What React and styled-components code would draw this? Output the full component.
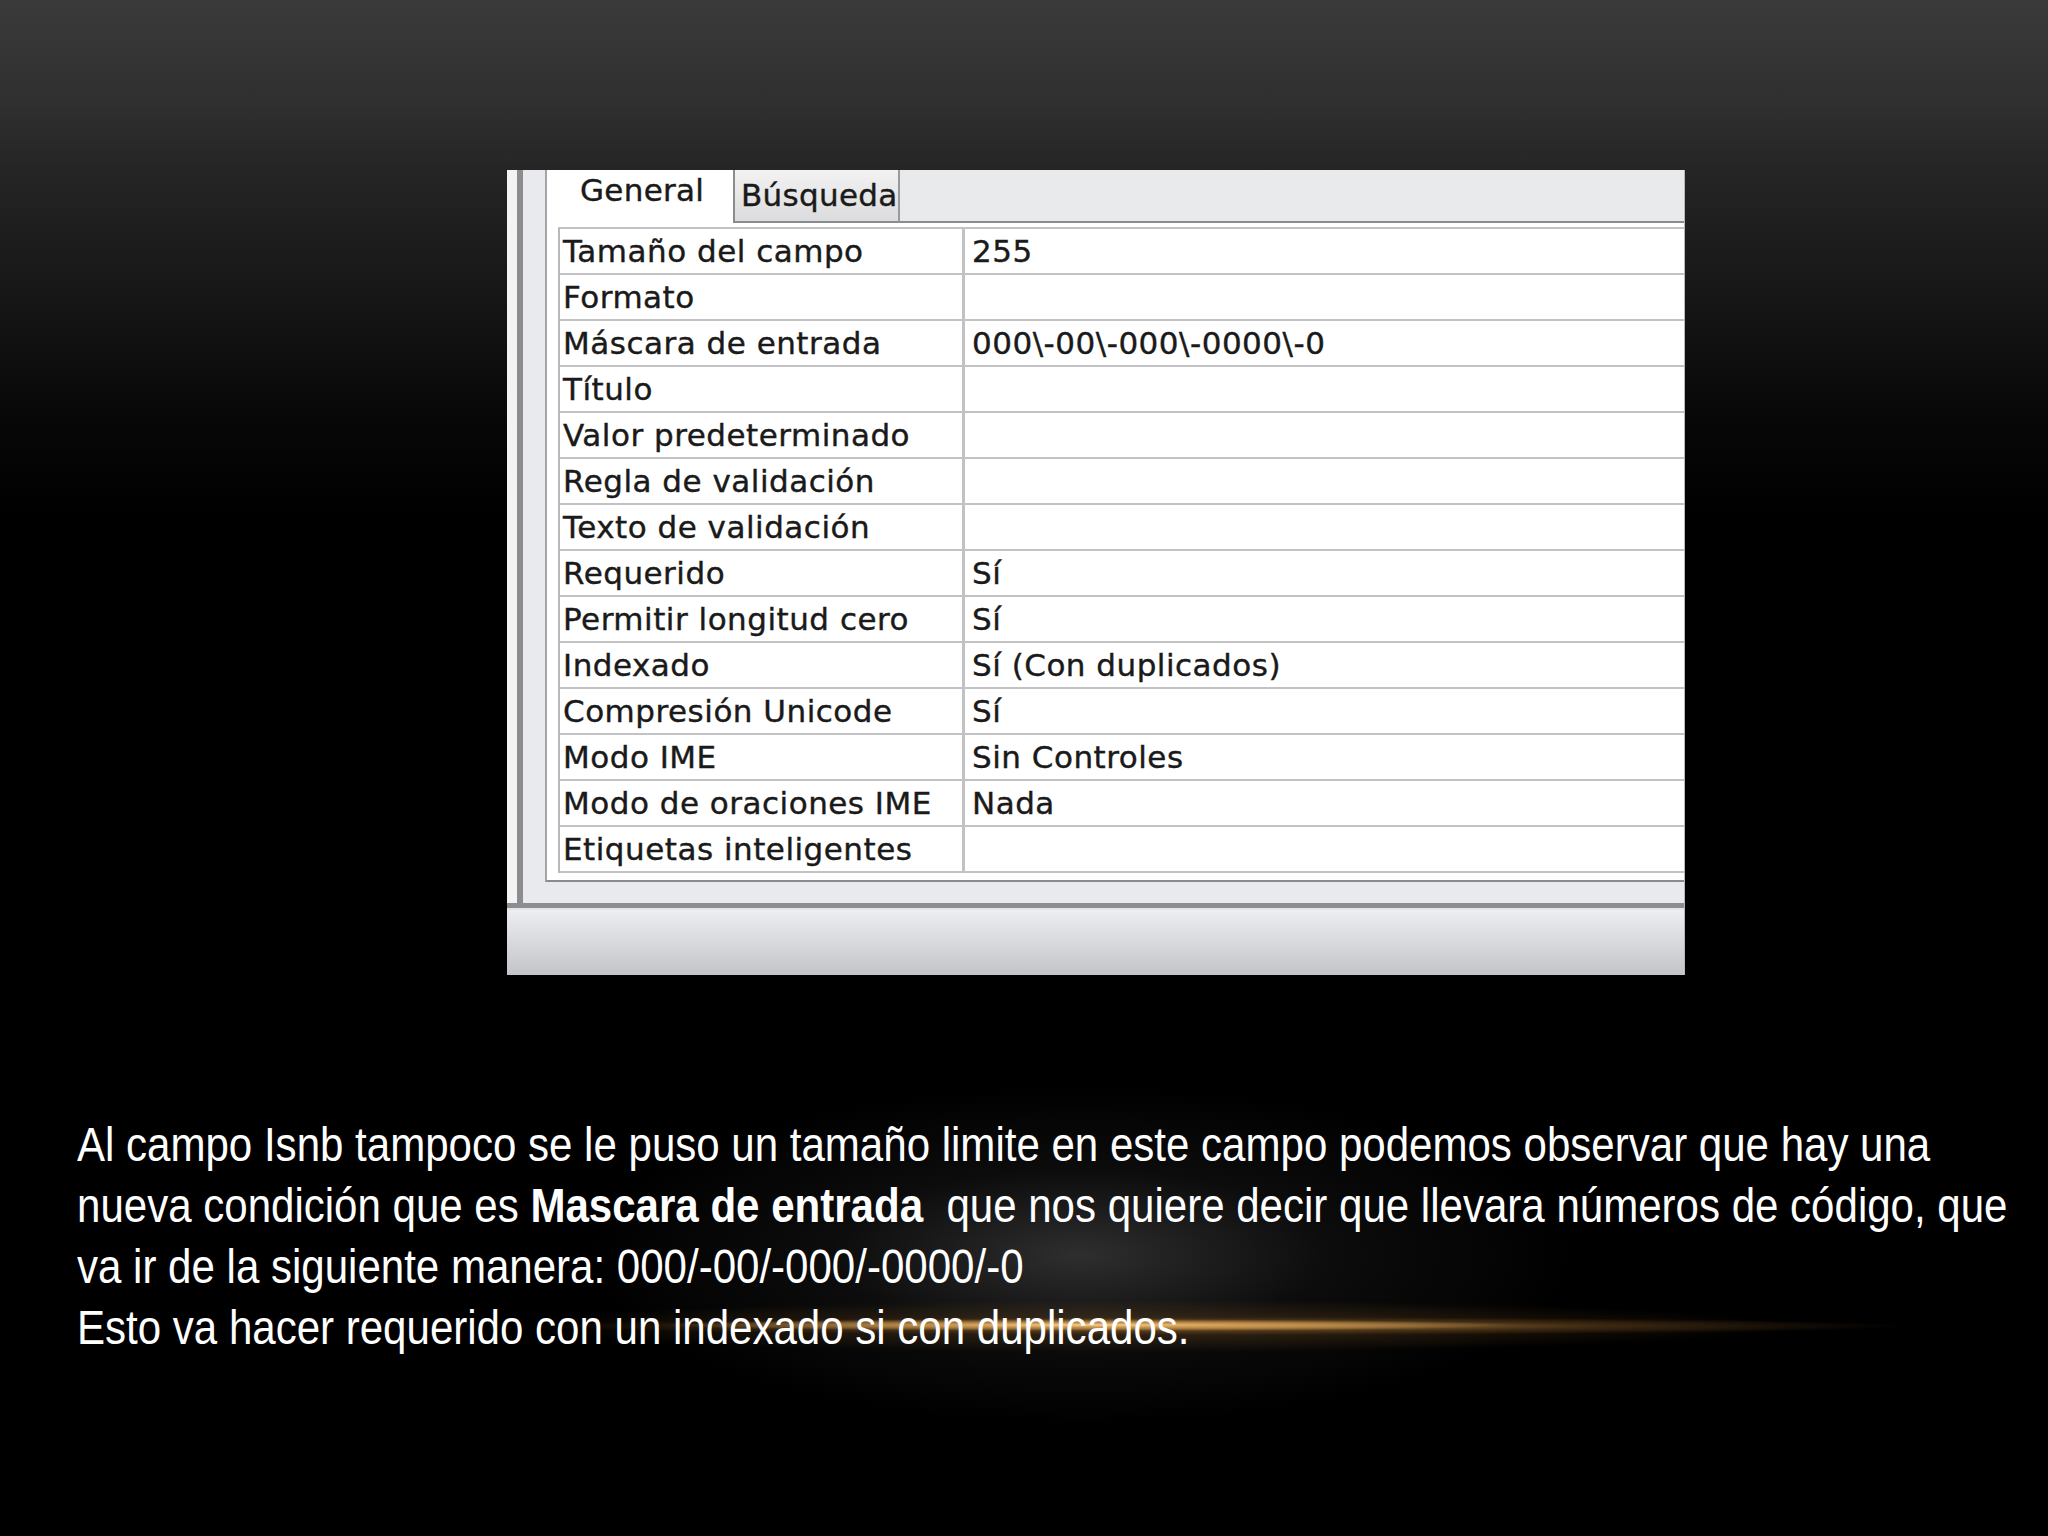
import React from "react";
import styled, { createGlobalStyle } from "styled-components";

const Global = createGlobalStyle`
  html, body {
    margin: 0;
    padding: 0;
    background: #000;
  }
`;

const Slide = styled.div`
  position: relative;
  width: 2048px;
  height: 1536px;
  overflow: hidden;
  box-sizing: border-box;
  padding-top: 170px;
  display: flex;
  flex-direction: column;
  background:
    radial-gradient(ellipse 430px 6px at 1090px 1325px, rgba(246, 206, 140, 1) 0%, rgba(214, 160, 86, 0.85) 35%, rgba(150, 100, 40, 0) 100%),
    radial-gradient(ellipse 680px 9px at 1230px 1326px, rgba(200, 150, 80, 0.75) 0%, rgba(140, 95, 40, 0.35) 55%, rgba(0, 0, 0, 0) 100%),
    radial-gradient(ellipse 640px 26px at 1150px 1326px, rgba(120, 78, 30, 0.45) 0%, rgba(0, 0, 0, 0) 100%),
    radial-gradient(ellipse 500px 170px at 1080px 1255px, rgba(62, 62, 62, 0.75) 0%, rgba(30, 30, 30, 0.4) 50%, rgba(0, 0, 0, 0) 100%),
    linear-gradient(to bottom, #3a3a3a 0px, #303030 100px, #252525 170px, #161616 300px, #070707 420px, #000 520px);
`;

const Window = styled.div`
  margin-left: 507px;
  width: 1178px;
  height: 805px;
  display: flex;
  flex-direction: column;
  overflow: hidden;
  border-right: 1px solid #b8b8b8;
  box-sizing: border-box;
`;

const Main = styled.div`
  flex: 1;
  display: flex;
  min-height: 0;
`;

const LeftEdge = styled.div`
  width: 10px;
  background: #f3f3f4;
`;

const Splitter = styled.div`
  width: 6px;
  background: #8c8c8e;
`;

const Panel = styled.div`
  flex: 1;
  min-width: 0;
  display: flex;
  background: #e9eaee;
  padding: 0 0 21px 22px;
`;

const TabPage = styled.div`
  flex: 1;
  min-width: 0;
  display: flex;
  flex-direction: column;
  background: #fff;
  border-left: 2px solid #a4a5a8;
  border-bottom: 2px solid #8a8b8e;
`;

const TabStrip = styled.div`
  display: flex;
  height: 53px;
  font-family: "DejaVu Sans", Verdana, sans-serif;
  font-size: 31px;
  letter-spacing: 0.3px;
  color: #1a1a1a;
  -webkit-text-stroke: 0.4px #1a1a1a;
`;

const Tab = styled.div`
  box-sizing: border-box;
  width: ${(p) => p.$w}px;
  height: 53px;
  padding: ${(p) => (p.$active ? "2px 0 0 33px" : "7px 0 0 6px")};
  line-height: 36px;
  background: ${(p) => (p.$active ? "#fff" : "linear-gradient(#f2f2f3, #dcdcde)")};
  border-left: ${(p) => (p.$active ? "none" : "2px solid #8c8c8e")};
  border-right: ${(p) => (p.$active ? "none" : "2px solid #9a9a9c")};
  border-bottom: ${(p) => (p.$active ? "none" : "2px solid #8a8b8e")};
  white-space: nowrap;
`;

const TabFill = styled.div`
  flex: 1;
  background: #e9eaec;
  border-bottom: 2px solid #8a8b8e;
`;

const Body = styled.div`
  flex: 1;
  padding: 4px 0 0 11px;
`;

const Grid = styled.div`
  width: 1300px;
  border-top: 2px solid #c2c2c4;
  border-left: 2px solid #b8b8ba;
  font-family: "DejaVu Sans", Verdana, sans-serif;
  font-size: 31px;
  letter-spacing: 0.5px;
  color: #1a1a1a;
  -webkit-text-stroke: 0.4px #1a1a1a;
`;

const Row = styled.div`
  display: grid;
  grid-template-columns: 405px 1fr;
  height: 46px;
  box-sizing: border-box;
  border-bottom: 2px solid #c2c2c4;
`;

const Cell = styled.div`
  line-height: 44px;
  padding-left: ${(p) => (p.$value ? 7 : 3)}px;
  white-space: nowrap;
  border-right: ${(p) => (p.$value ? "none" : "3px solid #c2c2c4")};
`;

const BottomRule = styled.div`
  height: 7px;
  background: linear-gradient(#8c8d90 0, #8c8d90 5px, #e4e5e8 5px);
`;

const StatusBar = styled.div`
  height: 65px;
  background: linear-gradient(#eceef1, #c3c4c8);
`;

/* Arial Narrow is not installed: Arial-width font squeezed to the narrow width */
const Caption = styled.div`
  margin-top: 139px;
  padding-left: 77px;
  font-family: "Liberation Sans", Arial, sans-serif;
  font-size: 49px;
  line-height: 61px;
  color: #fff;
  transform: scaleX(0.858);
  transform-origin: 77px 0;
  width: 2300px;
`;

const Line = styled.div`
  white-space: pre;
`;

const rows = [
  ["Tamaño del campo", "255"],
  ["Formato", ""],
  ["Máscara de entrada", "000\\-00\\-000\\-0000\\-0"],
  ["Título", ""],
  ["Valor predeterminado", ""],
  ["Regla de validación", ""],
  ["Texto de validación", ""],
  ["Requerido", "Sí"],
  ["Permitir longitud cero", "Sí"],
  ["Indexado", "Sí (Con duplicados)"],
  ["Compresión Unicode", "Sí"],
  ["Modo IME", "Sin Controles"],
  ["Modo de oraciones IME", "Nada"],
  ["Etiquetas inteligentes", ""],
];

export default function App() {
  return (
    <Slide>
      <Global />
      <Window>
        <Main>
          <LeftEdge />
          <Splitter />
          <Panel>
            <TabPage>
              <TabStrip>
                <Tab $active $w={186}>General</Tab>
                <Tab $w={167}>Búsqueda</Tab>
                <TabFill />
              </TabStrip>
              <Body>
                <Grid>
                  {rows.map(([label, value]) => (
                    <Row key={label}>
                      <Cell>{label}</Cell>
                      <Cell $value>{value}</Cell>
                    </Row>
                  ))}
                </Grid>
              </Body>
            </TabPage>
          </Panel>
        </Main>
        <BottomRule />
        <StatusBar />
      </Window>
      <Caption>
        <Line>Al campo Isnb tampoco se le puso un tamaño limite en este campo podemos observar que hay una</Line>
        <Line>
          nueva condición que es <b>Mascara de entrada</b>  que nos quiere decir que llevara números de código, que
        </Line>
        <Line>va ir de la siguiente manera: 000/-00/-000/-0000/-0</Line>
        <Line>Esto va hacer requerido con un indexado si con duplicados.</Line>
      </Caption>
    </Slide>
  );
}
